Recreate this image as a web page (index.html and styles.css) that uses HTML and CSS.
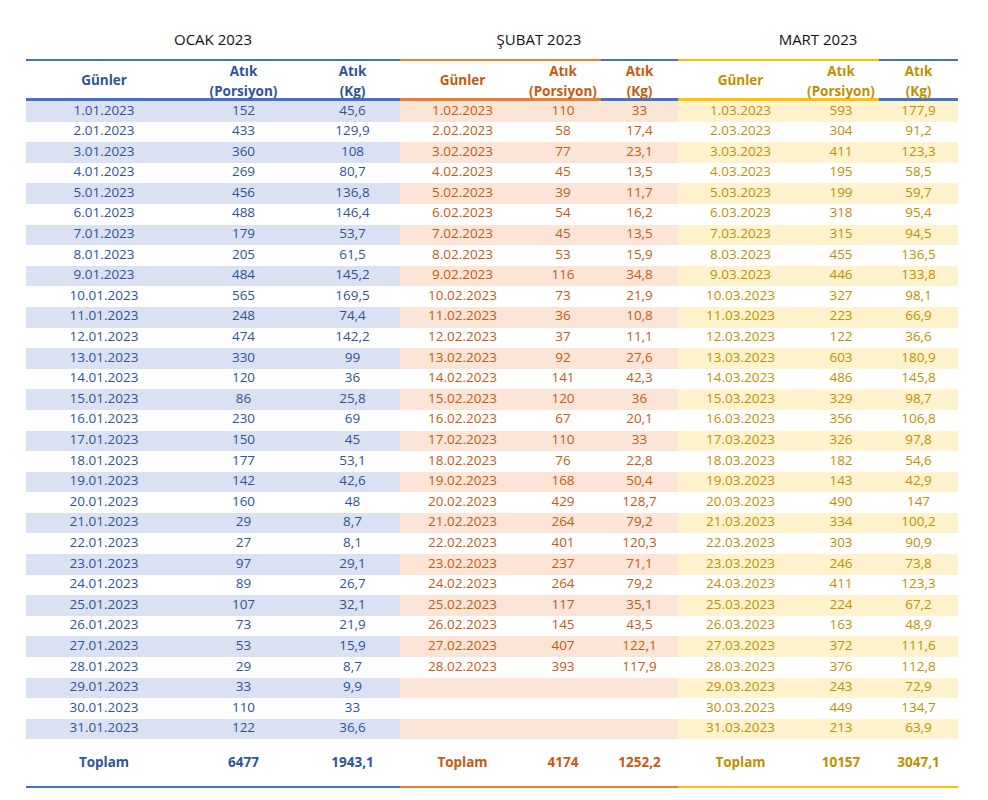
FILE: index.html
```html
<!DOCTYPE html>
<html lang="tr">
<head>
<meta charset="utf-8">
<title>Atık Tablosu 2023</title>
<link rel="stylesheet" href="styles.css">
</head>
<body>
<div class="sheet">

<section class="month ocak">
  <div class="title">OCAK 2023</div>
  <div class="head">
    <div class="h single">Günler</div>
    <div class="h">Atık<br>(Porsiyon)</div>
    <div class="h">Atık<br>(Kg)</div>
  </div>
  <div class="row alt"><div>1.01.2023</div><div>152</div><div>45,6</div></div>
  <div class="row"><div>2.01.2023</div><div>433</div><div>129,9</div></div>
  <div class="row alt"><div>3.01.2023</div><div>360</div><div>108</div></div>
  <div class="row"><div>4.01.2023</div><div>269</div><div>80,7</div></div>
  <div class="row alt"><div>5.01.2023</div><div>456</div><div>136,8</div></div>
  <div class="row"><div>6.01.2023</div><div>488</div><div>146,4</div></div>
  <div class="row alt"><div>7.01.2023</div><div>179</div><div>53,7</div></div>
  <div class="row"><div>8.01.2023</div><div>205</div><div>61,5</div></div>
  <div class="row alt"><div>9.01.2023</div><div>484</div><div>145,2</div></div>
  <div class="row"><div>10.01.2023</div><div>565</div><div>169,5</div></div>
  <div class="row alt"><div>11.01.2023</div><div>248</div><div>74,4</div></div>
  <div class="row"><div>12.01.2023</div><div>474</div><div>142,2</div></div>
  <div class="row alt"><div>13.01.2023</div><div>330</div><div>99</div></div>
  <div class="row"><div>14.01.2023</div><div>120</div><div>36</div></div>
  <div class="row alt"><div>15.01.2023</div><div>86</div><div>25,8</div></div>
  <div class="row"><div>16.01.2023</div><div>230</div><div>69</div></div>
  <div class="row alt"><div>17.01.2023</div><div>150</div><div>45</div></div>
  <div class="row"><div>18.01.2023</div><div>177</div><div>53,1</div></div>
  <div class="row alt"><div>19.01.2023</div><div>142</div><div>42,6</div></div>
  <div class="row"><div>20.01.2023</div><div>160</div><div>48</div></div>
  <div class="row alt"><div>21.01.2023</div><div>29</div><div>8,7</div></div>
  <div class="row"><div>22.01.2023</div><div>27</div><div>8,1</div></div>
  <div class="row alt"><div>23.01.2023</div><div>97</div><div>29,1</div></div>
  <div class="row"><div>24.01.2023</div><div>89</div><div>26,7</div></div>
  <div class="row alt"><div>25.01.2023</div><div>107</div><div>32,1</div></div>
  <div class="row"><div>26.01.2023</div><div>73</div><div>21,9</div></div>
  <div class="row alt"><div>27.01.2023</div><div>53</div><div>15,9</div></div>
  <div class="row"><div>28.01.2023</div><div>29</div><div>8,7</div></div>
  <div class="row alt"><div>29.01.2023</div><div>33</div><div>9,9</div></div>
  <div class="row"><div>30.01.2023</div><div>110</div><div>33</div></div>
  <div class="row alt"><div>31.01.2023</div><div>122</div><div>36,6</div></div>
  <div class="total"><div>Toplam</div><div>6477</div><div>1943,1</div></div>
</section>

<section class="month subat">
  <div class="title">ŞUBAT 2023</div>
  <div class="head">
    <div class="h single">Günler</div>
    <div class="h">Atık<br>(Porsiyon)</div>
    <div class="h blue">Atık<br>(Kg)</div>
  </div>
  <div class="row alt"><div>1.02.2023</div><div>110</div><div>33</div></div>
  <div class="row"><div>2.02.2023</div><div>58</div><div>17,4</div></div>
  <div class="row alt"><div>3.02.2023</div><div>77</div><div>23,1</div></div>
  <div class="row"><div>4.02.2023</div><div>45</div><div>13,5</div></div>
  <div class="row alt"><div>5.02.2023</div><div>39</div><div>11,7</div></div>
  <div class="row"><div>6.02.2023</div><div>54</div><div>16,2</div></div>
  <div class="row alt"><div>7.02.2023</div><div>45</div><div>13,5</div></div>
  <div class="row"><div>8.02.2023</div><div>53</div><div>15,9</div></div>
  <div class="row alt"><div>9.02.2023</div><div>116</div><div>34,8</div></div>
  <div class="row"><div>10.02.2023</div><div>73</div><div>21,9</div></div>
  <div class="row alt"><div>11.02.2023</div><div>36</div><div>10,8</div></div>
  <div class="row"><div>12.02.2023</div><div>37</div><div>11,1</div></div>
  <div class="row alt"><div>13.02.2023</div><div>92</div><div>27,6</div></div>
  <div class="row"><div>14.02.2023</div><div>141</div><div>42,3</div></div>
  <div class="row alt"><div>15.02.2023</div><div>120</div><div>36</div></div>
  <div class="row"><div>16.02.2023</div><div>67</div><div>20,1</div></div>
  <div class="row alt"><div>17.02.2023</div><div>110</div><div>33</div></div>
  <div class="row"><div>18.02.2023</div><div>76</div><div>22,8</div></div>
  <div class="row alt"><div>19.02.2023</div><div>168</div><div>50,4</div></div>
  <div class="row"><div>20.02.2023</div><div>429</div><div>128,7</div></div>
  <div class="row alt"><div>21.02.2023</div><div>264</div><div>79,2</div></div>
  <div class="row"><div>22.02.2023</div><div>401</div><div>120,3</div></div>
  <div class="row alt"><div>23.02.2023</div><div>237</div><div>71,1</div></div>
  <div class="row"><div>24.02.2023</div><div>264</div><div>79,2</div></div>
  <div class="row alt"><div>25.02.2023</div><div>117</div><div>35,1</div></div>
  <div class="row"><div>26.02.2023</div><div>145</div><div>43,5</div></div>
  <div class="row alt"><div>27.02.2023</div><div>407</div><div>122,1</div></div>
  <div class="row"><div>28.02.2023</div><div>393</div><div>117,9</div></div>
  <div class="row alt"><div></div><div></div><div></div></div>
  <div class="row"><div></div><div></div><div></div></div>
  <div class="row alt"><div></div><div></div><div></div></div>
  <div class="total"><div>Toplam</div><div>4174</div><div>1252,2</div></div>
</section>

<section class="month mart">
  <div class="title">MART 2023</div>
  <div class="head">
    <div class="h single">Günler</div>
    <div class="h">Atık<br>(Porsiyon)</div>
    <div class="h blue">Atık<br>(Kg)</div>
  </div>
  <div class="row alt"><div>1.03.2023</div><div>593</div><div>177,9</div></div>
  <div class="row"><div>2.03.2023</div><div>304</div><div>91,2</div></div>
  <div class="row alt"><div>3.03.2023</div><div>411</div><div>123,3</div></div>
  <div class="row"><div>4.03.2023</div><div>195</div><div>58,5</div></div>
  <div class="row alt"><div>5.03.2023</div><div>199</div><div>59,7</div></div>
  <div class="row"><div>6.03.2023</div><div>318</div><div>95,4</div></div>
  <div class="row alt"><div>7.03.2023</div><div>315</div><div>94,5</div></div>
  <div class="row"><div>8.03.2023</div><div>455</div><div>136,5</div></div>
  <div class="row alt"><div>9.03.2023</div><div>446</div><div>133,8</div></div>
  <div class="row"><div>10.03.2023</div><div>327</div><div>98,1</div></div>
  <div class="row alt"><div>11.03.2023</div><div>223</div><div>66,9</div></div>
  <div class="row"><div>12.03.2023</div><div>122</div><div>36,6</div></div>
  <div class="row alt"><div>13.03.2023</div><div>603</div><div>180,9</div></div>
  <div class="row"><div>14.03.2023</div><div>486</div><div>145,8</div></div>
  <div class="row alt"><div>15.03.2023</div><div>329</div><div>98,7</div></div>
  <div class="row"><div>16.03.2023</div><div>356</div><div>106,8</div></div>
  <div class="row alt"><div>17.03.2023</div><div>326</div><div>97,8</div></div>
  <div class="row"><div>18.03.2023</div><div>182</div><div>54,6</div></div>
  <div class="row alt"><div>19.03.2023</div><div>143</div><div>42,9</div></div>
  <div class="row"><div>20.03.2023</div><div>490</div><div>147</div></div>
  <div class="row alt"><div>21.03.2023</div><div>334</div><div>100,2</div></div>
  <div class="row"><div>22.03.2023</div><div>303</div><div>90,9</div></div>
  <div class="row alt"><div>23.03.2023</div><div>246</div><div>73,8</div></div>
  <div class="row"><div>24.03.2023</div><div>411</div><div>123,3</div></div>
  <div class="row alt"><div>25.03.2023</div><div>224</div><div>67,2</div></div>
  <div class="row"><div>26.03.2023</div><div>163</div><div>48,9</div></div>
  <div class="row alt"><div>27.03.2023</div><div>372</div><div>111,6</div></div>
  <div class="row"><div>28.03.2023</div><div>376</div><div>112,8</div></div>
  <div class="row alt"><div>29.03.2023</div><div>243</div><div>72,9</div></div>
  <div class="row"><div>30.03.2023</div><div>449</div><div>134,7</div></div>
  <div class="row alt"><div>31.03.2023</div><div>213</div><div>63,9</div></div>
  <div class="total"><div>Toplam</div><div>10157</div><div>3047,1</div></div>
</section>

</div>
</body>
</html>
```
FILE: styles.css
```css
html, body {
  margin: 0;
  padding: 0;
  background: #ffffff;
}

body {
  font-family: "Open Sans", "Liberation Sans", sans-serif;
  font-size: 13.5px;
}

.sheet {
  display: flex;
  padding-left: 26px;
}

.month {
  display: flex;
  flex-direction: column;
  color: var(--fg);
}

.ocak {
  --fg: #2f5496;
  --fill: #d9e1f2;
  --line: #4472c4;
  --cols: 156px 123px 95px;
  width: 374px;
}

.subat {
  --fg: #c55a11;
  --fill: #fce4d6;
  --line: #ed7d31;
  --cols: 125px 76px 77px;
  width: 278px;
}

.mart {
  --fg: #bf8f00;
  --fill: #fff2cc;
  --line: #ffc000;
  --cols: 125px 76px 79px;
  width: 280px;
}

.title {
  box-sizing: border-box;
  height: 59px;
  padding-top: 28.5px;
  font-size: 15px;
  line-height: 20px;
  text-align: center;
  color: #111111;
}

.head,
.row,
.total {
  display: grid;
  grid-template-columns: var(--cols);
  text-align: center;
}

.head {
  align-items: start;
}

.h {
  box-sizing: border-box;
  height: 42px;
  border-top: 2px solid var(--line);
  border-bottom: 3px solid var(--line);
  font-weight: 700;
  line-height: 20px;
  white-space: nowrap;
}

.h.single {
  padding-top: 8.5px;
}

.h.blue {
  border-color: #4472c4;
}

.row {
  box-sizing: border-box;
  height: 20.6px;
  padding-top: 1.5px;
  line-height: 15px;
  white-space: nowrap;
}

.row.alt {
  background: var(--fill);
}

.total {
  height: 46.4px;
  line-height: 46.4px;
  font-weight: 700;
  border-bottom: 2px solid var(--line);
}
```
